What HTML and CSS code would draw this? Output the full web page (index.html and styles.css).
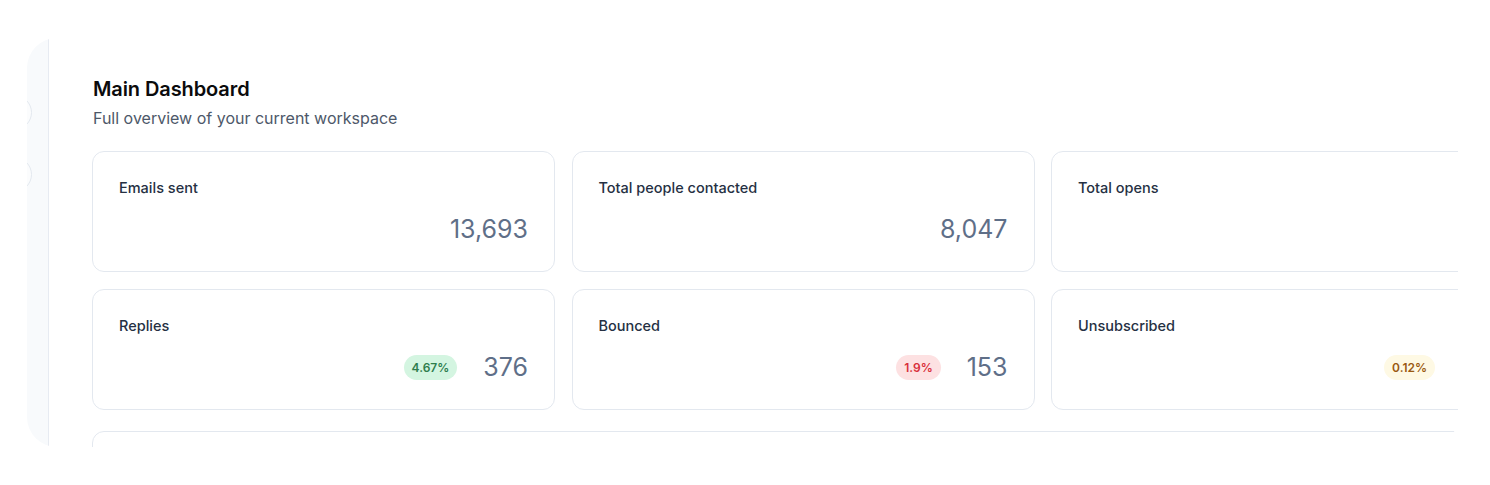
FILE: index.html
```html
<!DOCTYPE html>
<html lang="en">
<head>
<meta charset="utf-8">
<title>Main Dashboard</title>
<link rel="stylesheet" href="styles.css">
</head>
<body>
<div class="app">
  <aside class="sidebar">
    <div class="nav-dot"></div>
    <div class="nav-dot"></div>
  </aside>
  <main class="main">
    <h1 class="title">Main Dashboard</h1>
    <p class="subtitle">Full overview of your current workspace</p>
    <div class="grid">
      <div class="card">
        <div class="label">Emails sent</div>
        <div class="value-row"><span class="value">13,693</span></div>
      </div>
      <div class="card">
        <div class="label">Total people contacted</div>
        <div class="value-row"><span class="value">8,047</span></div>
      </div>
      <div class="card">
        <div class="label">Total opens</div>
        <div class="value-row"><span class="value value-offscreen"></span></div>
      </div>
      <div class="card">
        <div class="label">Replies</div>
        <div class="value-row"><span class="badge badge-green">4.67%</span><span class="value">376</span></div>
      </div>
      <div class="card">
        <div class="label">Bounced</div>
        <div class="value-row"><span class="badge badge-red">1.9%</span><span class="value">153</span></div>
      </div>
      <div class="card">
        <div class="label">Unsubscribed</div>
        <div class="value-row"><span class="badge badge-yellow">0.12%</span><span class="value value-offscreen"></span></div>
      </div>
      <div class="card card-wide"></div>
    </div>
  </main>
</div>
</body>
</html>
```

FILE: styles.css
```css
* { box-sizing: border-box; }

html, body {
  margin: 0;
  padding: 0;
  background: #ffffff;
  font-family: Inter, "Noto Sans", "Liberation Sans", sans-serif;
}

.app {
  margin: 38px 0 0 27px;
  width: 1431px;
  height: 409px;
  border-radius: 30px;
  overflow: hidden;
  display: flex;
  background: #ffffff;
}

.sidebar {
  width: 22px;
  flex-shrink: 0;
  background: #f8fafc;
  border-right: 1px solid #e7ebf2;
  padding-top: 57px;
  display: flex;
  flex-direction: column;
  gap: 27px;
}

.nav-dot {
  width: 35px;
  height: 35px;
  margin-left: -30px;
  border-radius: 50%;
  border: 1px solid #e3e8ef;
  background: #fbfcfd;
  flex-shrink: 0;
}

.main {
  flex: 1;
  min-width: 0;
  padding: 37px 0 0 43px;
}

.title {
  margin: 0 0 0 1px;
  font-size: 20px;
  line-height: 29px;
  font-weight: 600;
  color: #0b0b0c;
  letter-spacing: -0.1px;
}

.subtitle {
  margin: 3px 0 0 1px;
  font-size: 16px;
  line-height: 22px;
  color: #4d5869;
}

.grid {
  margin-top: 22px;
  display: grid;
  grid-template-columns: repeat(3, 463px);
  column-gap: 16.5px;
  row-gap: 17px;
  grid-auto-rows: 121px;
}

.card {
  border: 1px solid #e3e8ef;
  border-radius: 12px;
  background: #ffffff;
  padding: 26px 26px 0 26px;
}

.card-wide {
  grid-column: 1 / -1;
  margin-top: 4px;
}

.label {
  font-size: 14.5px;
  line-height: 20px;
  font-weight: 500;
  color: #253043;
}

.value-row {
  margin-top: 15px;
  display: flex;
  justify-content: flex-end;
  align-items: center;
  gap: 26px;
  height: 32px;
}

.value {
  font-size: 25px;
  line-height: 32px;
  color: #5f6f88;
  font-weight: 400;
}

.value-offscreen {
  width: 26px;
}

.badge {
  display: inline-flex;
  align-items: center;
  height: 25px;
  padding: 0 8px;
  border-radius: 13px;
  font-size: 12px;
  font-weight: 600;
}

.badge-green { background: #d4f5e1; color: #2e7d4d; }
.badge-red { background: #fde1e2; color: #d92f3a; }
.badge-yellow { background: #fef9e4; color: #9a5a12; }
```
